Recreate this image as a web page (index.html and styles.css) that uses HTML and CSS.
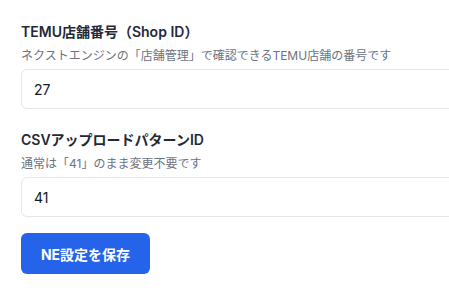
FILE: index.html
```html
<!DOCTYPE html>
<html lang="ja">
<head>
<meta charset="utf-8">
<link rel="stylesheet" href="styles.css">
</head>
<body>
<div class="form">
  <div class="field">
    <label class="label">TEMU店舗番号（Shop ID）</label>
    <p class="hint">ネクストエンジンの「店舗管理」で確認できるTEMU店舗の番号です</p>
    <input class="input" type="text" value="27">
  </div>
  <div class="field">
    <label class="label">CSVアップロードパターンID</label>
    <p class="hint">通常は「41」のまま変更不要です</p>
    <input class="input" type="text" value="41">
  </div>
  <button class="btn" type="button">NE設定を保存</button>
</div>
</body>
</html>
```
FILE: styles.css
```css
html, body {
  margin: 0;
  padding: 0;
  background: #ffffff;
  overflow: hidden;
}
body {
  font-family: Inter, "Noto Sans CJK JP", sans-serif;
}
.form {
  width: 500px;
  padding: 22px 0 0 21px;
  display: flex;
  flex-direction: column;
  align-items: flex-start;
}
.field {
  width: 100%;
  display: flex;
  flex-direction: column;
  margin-bottom: 21px;
}
.field:last-of-type {
  margin-bottom: 16px;
}
.label {
  font-size: 14px;
  line-height: 20px;
  font-weight: 600;
  color: #1f2937;
  margin-bottom: 6px;
}
.hint {
  margin: 0 0 5px 0;
  font-size: 12px;
  line-height: 16px;
  color: #6b7280;
}
.input {
  box-sizing: border-box;
  width: 100%;
  height: 40px;
  border: 1px solid #e5e7eb;
  border-radius: 6px;
  padding: 0 12px;
  font-family: Inter, "Noto Sans CJK JP", sans-serif;
  font-size: 14px;
  color: #111827;
  background: #fff;
  outline: none;
}
.btn {
  box-sizing: border-box;
  width: 129px;
  height: 41px;
  border: none;
  border-radius: 6px;
  background: #2563eb;
  color: #fff;
  font-family: Inter, "Noto Sans CJK JP", sans-serif;
  font-size: 14px;
  font-weight: 700;
  cursor: pointer;
}
```
